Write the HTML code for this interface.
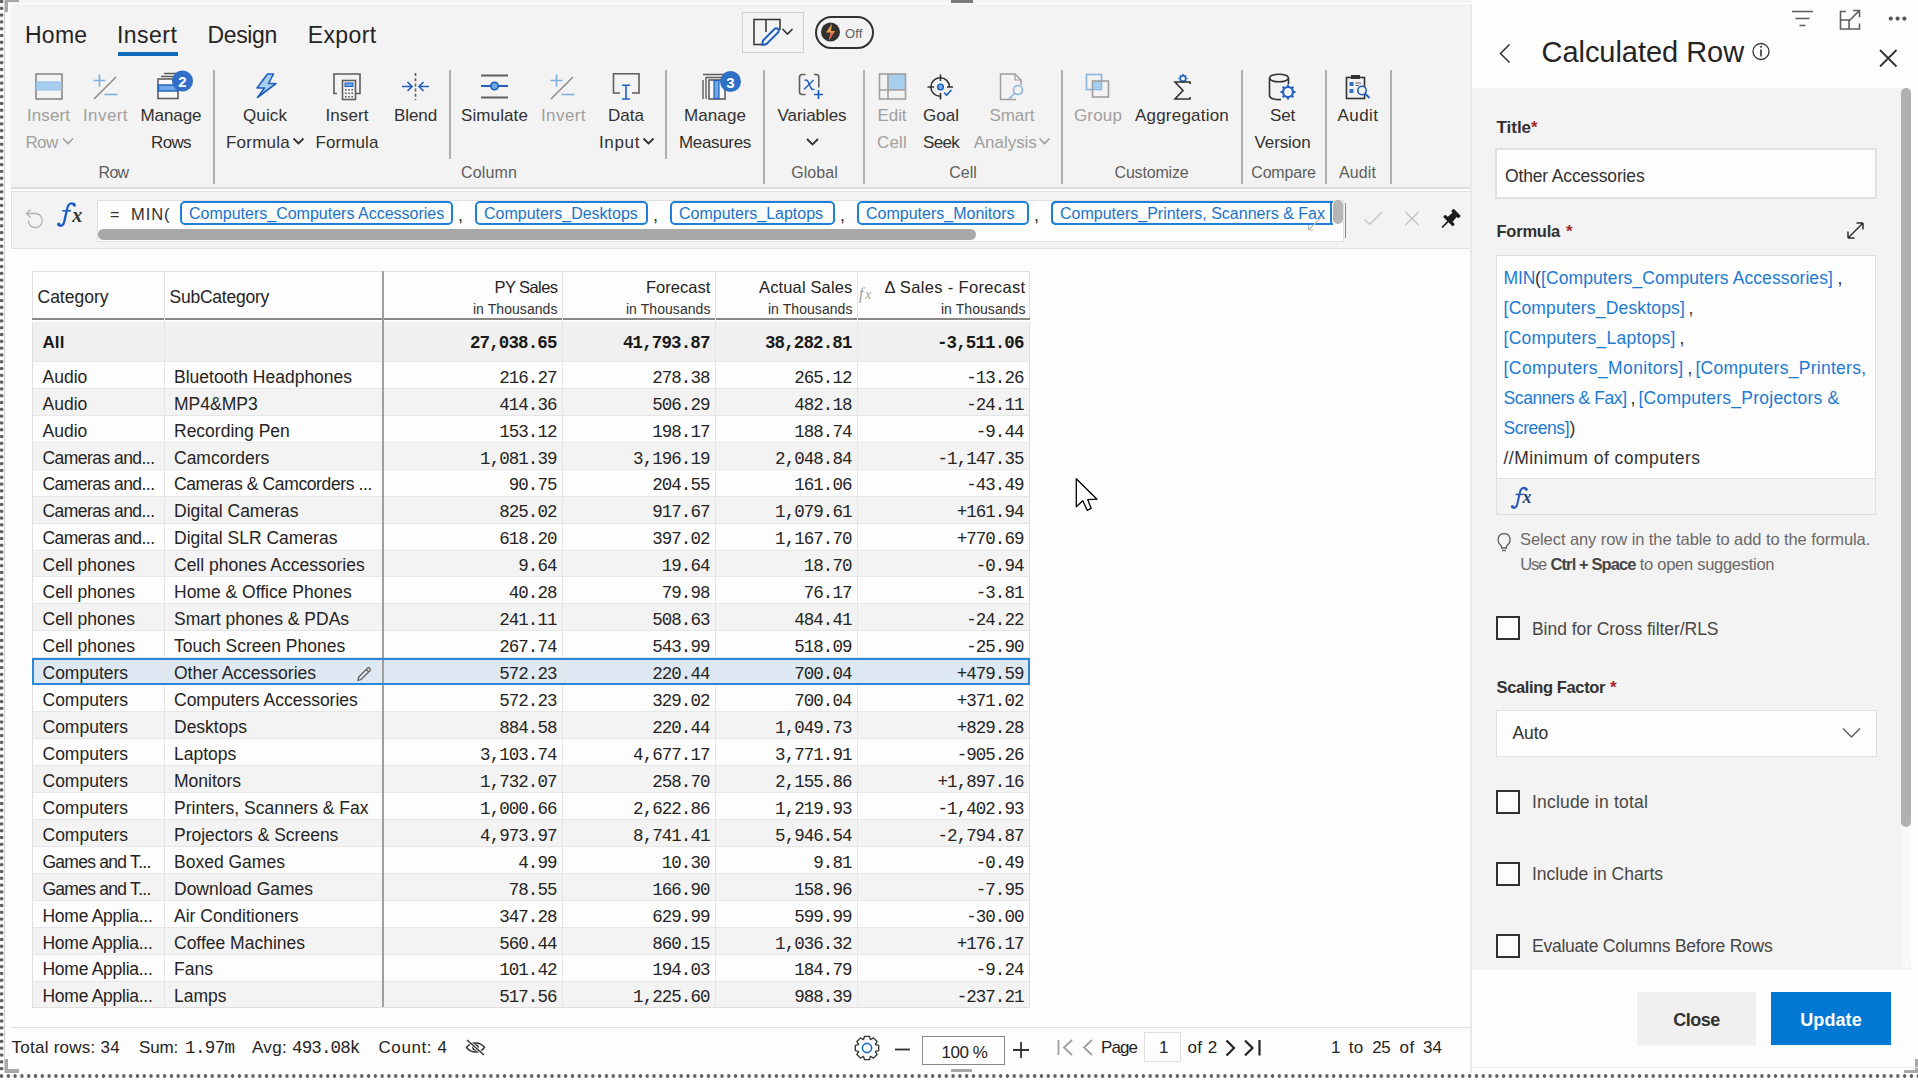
<!DOCTYPE html>
<html><head><meta charset="utf-8"><title>Calculated Row</title>
<style>
html,body{margin:0;padding:0;}
body{width:1918px;height:1080px;overflow:hidden;position:relative;background:#fdfdfd;font-family:'Liberation Sans', sans-serif;}
.t{position:absolute;white-space:nowrap;}
.b{position:absolute;box-sizing:border-box;}
</style></head><body>
<div class="b" style="left:5px;top:0px;width:1913px;height:3px;background:#f4f4f6;"></div><div class="b" style="left:0px;top:0px;width:5px;height:1073px;background:radial-gradient(circle at 1.7px 3.4px,#5f5f5f 1.5px,transparent 2.1px) 0 -1.9px/5px 6.8px repeat-y;"></div><div class="b" style="left:0px;top:1073px;width:1918px;height:7px;background:radial-gradient(circle at 3.4px 3px,#5f5f5f 1.5px,transparent 2.1px) -1.9px 0/6.8px 7px repeat-x;"></div><div class="b" style="left:4px;top:0px;width:1px;height:1073px;background:#d0d0d0;"></div><div class="b" style="left:951px;top:0px;width:22px;height:3px;background:#7a7a7a;"></div><div class="b" style="left:11px;top:4px;width:1460px;height:184px;background:#f3f3f3;"></div><div class="b" style="left:11px;top:187px;width:1460px;height:2px;background:#dcdcdc;"></div><div class="b" style="left:11px;top:191px;width:1460px;height:58px;background:#f3f3f3;border:1px solid #e1e1e1;"></div><div class="b" style="left:11px;top:249px;width:1460px;height:824px;background:#fdfdfd;"></div><div class="b" style="left:1470px;top:4px;width:2px;height:1069px;background:#e8e8e8;"></div><div class="b" style="left:1472px;top:0px;width:446px;height:88px;background:#fdfdfd;"></div><div class="b" style="left:1472px;top:88px;width:439px;height:882px;background:#f3f3f3;"></div><div class="b" style="left:1472px;top:970px;width:446px;height:103px;background:#fdfdfd;"></div><div class="t" style="top:24.00px;font-size:23px;line-height:23px;color:#252423;font-weight:400;font-family:'Liberation Sans', sans-serif;letter-spacing:0.25px;left:25px;">Home</div><div class="t" style="top:24.00px;font-size:23px;line-height:23px;color:#252423;font-weight:400;font-family:'Liberation Sans', sans-serif;letter-spacing:0.46px;left:117px;">Insert</div><div class="t" style="top:24.00px;font-size:23px;line-height:23px;color:#252423;font-weight:400;font-family:'Liberation Sans', sans-serif;letter-spacing:-0.38px;left:207.6px;">Design</div><div class="t" style="top:24.00px;font-size:23px;line-height:23px;color:#252423;font-weight:400;font-family:'Liberation Sans', sans-serif;letter-spacing:0.38px;left:307.7px;">Export</div><div class="b" style="left:118px;top:52px;width:60px;height:4px;background:#0f6cbd;"></div><div class="t" style="top:107.00px;font-size:17px;line-height:17px;color:#a19f9d;font-weight:400;font-family:'Liberation Sans', sans-serif;letter-spacing:0.083px;left:-251.5px;width:600px;text-align:center;">Insert</div><div class="t" style="top:134.00px;font-size:17px;line-height:17px;color:#a19f9d;font-weight:400;font-family:'Liberation Sans', sans-serif;letter-spacing:-0.672px;left:25.5px;">Row</div><div class="t" style="top:107.00px;font-size:17px;line-height:17px;color:#a19f9d;font-weight:400;font-family:'Liberation Sans', sans-serif;letter-spacing:0.417px;left:-194.5px;width:600px;text-align:center;">Invert</div><div class="t" style="top:107.00px;font-size:17px;line-height:17px;color:#323130;font-weight:400;font-family:'Liberation Sans', sans-serif;letter-spacing:-0.07px;left:-129px;width:600px;text-align:center;">Manage</div><div class="t" style="top:134.00px;font-size:17px;line-height:17px;color:#323130;font-weight:400;font-family:'Liberation Sans', sans-serif;letter-spacing:-0.629px;left:-129px;width:600px;text-align:center;">Rows</div><div class="t" style="top:107.00px;font-size:17px;line-height:17px;color:#323130;font-weight:400;font-family:'Liberation Sans', sans-serif;letter-spacing:0.109px;left:-35px;width:600px;text-align:center;">Quick</div><div class="t" style="top:134.00px;font-size:17px;line-height:17px;color:#323130;font-weight:400;font-family:'Liberation Sans', sans-serif;letter-spacing:0.237px;left:226px;">Formula</div><div class="t" style="top:107.00px;font-size:17px;line-height:17px;color:#323130;font-weight:400;font-family:'Liberation Sans', sans-serif;letter-spacing:0.083px;left:47px;width:600px;text-align:center;">Insert</div><div class="t" style="top:134.00px;font-size:17px;line-height:17px;color:#323130;font-weight:400;font-family:'Liberation Sans', sans-serif;letter-spacing:0.094px;left:47px;width:600px;text-align:center;">Formula</div><div class="t" style="top:107.00px;font-size:17px;line-height:17px;color:#323130;font-weight:400;font-family:'Liberation Sans', sans-serif;letter-spacing:-0.097px;left:115.5px;width:600px;text-align:center;">Blend</div><div class="t" style="top:107.00px;font-size:17px;line-height:17px;color:#323130;font-weight:400;font-family:'Liberation Sans', sans-serif;letter-spacing:0.107px;left:194.5px;width:600px;text-align:center;">Simulate</div><div class="t" style="top:107.00px;font-size:17px;line-height:17px;color:#a19f9d;font-weight:400;font-family:'Liberation Sans', sans-serif;letter-spacing:0.417px;left:263.5px;width:600px;text-align:center;">Invert</div><div class="t" style="top:107.00px;font-size:17px;line-height:17px;color:#323130;font-weight:400;font-family:'Liberation Sans', sans-serif;letter-spacing:0.023px;left:326px;width:600px;text-align:center;">Data</div><div class="t" style="top:134.00px;font-size:17px;line-height:17px;color:#323130;font-weight:400;font-family:'Liberation Sans', sans-serif;letter-spacing:0.641px;left:599px;">Input</div><div class="t" style="top:107.00px;font-size:17px;line-height:17px;color:#323130;font-weight:400;font-family:'Liberation Sans', sans-serif;letter-spacing:0.096px;left:415px;width:600px;text-align:center;">Manage</div><div class="t" style="top:134.00px;font-size:17px;line-height:17px;color:#323130;font-weight:400;font-family:'Liberation Sans', sans-serif;letter-spacing:-0.328px;left:415px;width:600px;text-align:center;">Measures</div><div class="t" style="top:107.00px;font-size:17px;line-height:17px;color:#323130;font-weight:400;font-family:'Liberation Sans', sans-serif;letter-spacing:-0.068px;left:512px;width:600px;text-align:center;">Variables</div><div class="t" style="top:107.00px;font-size:17px;line-height:17px;color:#a19f9d;font-weight:400;font-family:'Liberation Sans', sans-serif;letter-spacing:-0.074px;left:592px;width:600px;text-align:center;">Edit</div><div class="t" style="top:134.00px;font-size:17px;line-height:17px;color:#a19f9d;font-weight:400;font-family:'Liberation Sans', sans-serif;letter-spacing:0.176px;left:592px;width:600px;text-align:center;">Cell</div><div class="t" style="top:107.00px;font-size:17px;line-height:17px;color:#323130;font-weight:400;font-family:'Liberation Sans', sans-serif;letter-spacing:0.023px;left:641px;width:600px;text-align:center;">Goal</div><div class="t" style="top:134.00px;font-size:17px;line-height:17px;color:#323130;font-weight:400;font-family:'Liberation Sans', sans-serif;letter-spacing:-0.688px;left:641px;width:600px;text-align:center;">Seek</div><div class="t" style="top:107.00px;font-size:17px;line-height:17px;color:#a19f9d;font-weight:400;font-family:'Liberation Sans', sans-serif;letter-spacing:-0.066px;left:712px;width:600px;text-align:center;">Smart</div><div class="t" style="top:134.00px;font-size:17px;line-height:17px;color:#a19f9d;font-weight:400;font-family:'Liberation Sans', sans-serif;letter-spacing:-0.039px;left:973.8px;">Analysis</div><div class="t" style="top:107.00px;font-size:17px;line-height:17px;color:#a19f9d;font-weight:400;font-family:'Liberation Sans', sans-serif;letter-spacing:0.153px;left:798px;width:600px;text-align:center;">Group</div><div class="t" style="top:107.00px;font-size:17px;line-height:17px;color:#323130;font-weight:400;font-family:'Liberation Sans', sans-serif;letter-spacing:0.212px;left:882px;width:600px;text-align:center;">Aggregation</div><div class="t" style="top:107.00px;font-size:17px;line-height:17px;color:#323130;font-weight:400;font-family:'Liberation Sans', sans-serif;letter-spacing:-0.172px;left:982.5px;width:600px;text-align:center;">Set</div><div class="t" style="top:134.00px;font-size:17px;line-height:17px;color:#323130;font-weight:400;font-family:'Liberation Sans', sans-serif;letter-spacing:-0.1px;left:982.5px;width:600px;text-align:center;">Version</div><div class="t" style="top:107.00px;font-size:17px;line-height:17px;color:#323130;font-weight:400;font-family:'Liberation Sans', sans-serif;letter-spacing:0.45px;left:1058px;width:600px;text-align:center;">Audit</div><div class="t" style="top:165.00px;font-size:16px;line-height:16px;color:#605e5c;font-weight:400;font-family:'Liberation Sans', sans-serif;letter-spacing:-0.677px;left:-186.5px;width:600px;text-align:center;">Row</div><div class="t" style="top:165.00px;font-size:16px;line-height:16px;color:#605e5c;font-weight:400;font-family:'Liberation Sans', sans-serif;letter-spacing:0.138px;left:189px;width:600px;text-align:center;">Column</div><div class="t" style="top:165.00px;font-size:16px;line-height:16px;color:#605e5c;font-weight:400;font-family:'Liberation Sans', sans-serif;letter-spacing:0.034px;left:514.5px;width:600px;text-align:center;">Global</div><div class="t" style="top:165.00px;font-size:16px;line-height:16px;color:#605e5c;font-weight:400;font-family:'Liberation Sans', sans-serif;letter-spacing:-0.023px;left:663px;width:600px;text-align:center;">Cell</div><div class="t" style="top:165.00px;font-size:16px;line-height:16px;color:#605e5c;font-weight:400;font-family:'Liberation Sans', sans-serif;letter-spacing:-0.181px;left:851.5px;width:600px;text-align:center;">Customize</div><div class="t" style="top:165.00px;font-size:16px;line-height:16px;color:#605e5c;font-weight:400;font-family:'Liberation Sans', sans-serif;letter-spacing:-0.192px;left:983.5px;width:600px;text-align:center;">Compare</div><div class="t" style="top:165.00px;font-size:16px;line-height:16px;color:#605e5c;font-weight:400;font-family:'Liberation Sans', sans-serif;letter-spacing:0.1px;left:1057.5px;width:600px;text-align:center;">Audit</div><div class="b" style="left:212.5px;top:70px;width:2px;height:114px;background:#b0b0b0;"></div><div class="b" style="left:448.5px;top:70px;width:2px;height:89px;background:#b0b0b0;"></div><div class="b" style="left:665px;top:70px;width:2px;height:89px;background:#b0b0b0;"></div><div class="b" style="left:763px;top:70px;width:2px;height:114px;background:#b0b0b0;"></div><div class="b" style="left:863px;top:70px;width:2px;height:114px;background:#b0b0b0;"></div><div class="b" style="left:1061px;top:70px;width:2px;height:114px;background:#b0b0b0;"></div><div class="b" style="left:1241px;top:70px;width:2px;height:114px;background:#b0b0b0;"></div><div class="b" style="left:1325px;top:70px;width:2px;height:114px;background:#b0b0b0;"></div><div class="b" style="left:1390px;top:70px;width:2px;height:114px;background:#b0b0b0;"></div><svg class="b" style="left:0;top:0" width="1918" height="200" viewBox="0 0 1918 200" fill="none">
<!-- chevrons -->
<path d="M63 138.5 l5 5 l5 -5" stroke="#a19f9d" stroke-width="1.7"/>
<path d="M293.5 138.5 l5 5 l5 -5" stroke="#323130" stroke-width="1.8"/>
<path d="M643.5 138.5 l5 5 l5 -5" stroke="#323130" stroke-width="1.8"/>
<path d="M807 139 l5.5 5.5 l5.5 -5.5" stroke="#323130" stroke-width="1.8"/>
<path d="M1039.5 138.5 l5 5 l5 -5" stroke="#a19f9d" stroke-width="1.7"/>
<!-- insert row -->
<rect x="36" y="74" width="26" height="25" stroke="#8a8886" stroke-width="1.6"/>
<rect x="36.5" y="82" width="25" height="8" fill="#a9cff0" stroke="#8fbde6" stroke-width="1"/>
<!-- invert (x2) -->
<g id="inv1" stroke="#7fb0de" stroke-width="1.6">
<path d="M93.5 80.5 h12 M99.5 74.5 v12"/><path d="M104.5 94.5 h13"/>
</g>
<path d="M94 99 L116 77" stroke="#8a8886" stroke-width="1.5"/>
<g stroke="#7fb0de" stroke-width="1.6"><path d="M550.5 80.5 h12 M556.5 74.5 v12"/><path d="M561.5 94.5 h13"/></g>
<path d="M551 99 L573 77" stroke="#8a8886" stroke-width="1.5"/>
<!-- manage rows -->
<path d="M164 73.5 h16 M161 76.5 h18" stroke="#605e5c" stroke-width="1.4"/>
<rect x="158" y="79" width="20" height="19.5" fill="#fafafa" stroke="#605e5c" stroke-width="1.6"/>
<rect x="158.5" y="85" width="19" height="6" fill="#6fa8e3" stroke="#1f5fbf" stroke-width="1.4"/>
<circle cx="182.5" cy="81" r="10.5" fill="#2f6fc7"/>
<text x="182.5" y="87" font-family="Liberation Sans" font-weight="700" font-size="15" fill="#fff" text-anchor="middle">2</text>
<!-- quick formula bolt -->
<path d="M267.5 74 L257 88 H264.5 L257.5 97.5 L276 83.5 H268.5 L273.5 74 Z" fill="#a9cff0" stroke="#1f5fbf" stroke-width="1.6" stroke-linejoin="round"/>
<!-- insert formula -->
<path d="M337 93.5 H334 V74 H360 V93.5 H356" stroke="#605e5c" stroke-width="1.6"/>
<rect x="342.5" y="80.5" width="13" height="19" fill="#f3f3f3" stroke="#605e5c" stroke-width="1.6"/>
<rect x="345" y="83" width="8" height="3.5" fill="#6fa8e3" stroke="#1f5fbf" stroke-width="1"/>
<g fill="#605e5c"><rect x="345" y="89" width="1.6" height="1.6"/><rect x="348.2" y="89" width="1.6" height="1.6"/><rect x="351.4" y="89" width="1.6" height="1.6"/><rect x="345" y="92.5" width="1.6" height="1.6"/><rect x="348.2" y="92.5" width="1.6" height="1.6"/><rect x="351.4" y="92.5" width="1.6" height="1.6"/><rect x="345" y="96" width="1.6" height="1.6"/><rect x="348.2" y="96" width="1.6" height="1.6"/><rect x="351.4" y="96" width="1.6" height="1.6"/></g>
<!-- blend -->
<path d="M415.5 73 V100" stroke="#605e5c" stroke-width="1.6" stroke-dasharray="3 2.2"/>
<path d="M402 86.5 H412 M407.5 82 L412 86.5 L407.5 91" stroke="#1f5fbf" stroke-width="1.6"/>
<path d="M429 86.5 H419 M423.5 82 L419 86.5 L423.5 91" stroke="#1f5fbf" stroke-width="1.6"/>
<!-- simulate -->
<path d="M481 75.5 H508 M481 97.5 H508 M481 86 H508" stroke="#605e5c" stroke-width="1.8"/>
<path d="M481 86 H508" stroke="#1f5fbf" stroke-width="1.8"/>
<circle cx="494.5" cy="86" r="3.8" fill="#6fa8e3" stroke="#1f5fbf" stroke-width="1.6"/>
<!-- data input -->
<path d="M620 93 H613.5 V73.8 H639 V93 H632" stroke="#605e5c" stroke-width="1.6"/>
<path d="M626 85 V99 M622 85.2 H630 M622 99 H630" stroke="#1f5fbf" stroke-width="1.6"/>
<!-- manage measures -->
<path d="M703 80 V99 M706 77 V99 M703 74.5 H725 M706 77.5 H723" stroke="#605e5c" stroke-width="1.4"/>
<rect x="709" y="80" width="16" height="19" fill="#fafafa" stroke="#605e5c" stroke-width="1.6"/>
<rect x="714" y="80.5" width="5" height="18" fill="#6fa8e3" stroke="#1f5fbf" stroke-width="1.2"/>
<circle cx="730.5" cy="81.5" r="10.5" fill="#2f6fc7"/>
<text x="730.5" y="87.5" font-family="Liberation Sans" font-weight="700" font-size="15" fill="#fff" text-anchor="middle">3</text>
<!-- variables -->
<path d="M805.5 74.5 H802 Q799.5 74.5 799.5 77.5 V91.5 Q799.5 94.5 802 94.5 H805.5" stroke="#605e5c" stroke-width="1.6"/>
<path d="M814 74.5 H816.5 Q818.8 74.5 818.8 77.5 V87.5" stroke="#605e5c" stroke-width="1.6"/>
<path d="M804.5 80.5 Q806.5 79 808 81.5 L811 88 Q812.5 90.5 814.5 89" stroke="#1f5fbf" stroke-width="1.5"/>
<path d="M813.5 80 L804 89.5" stroke="#1f5fbf" stroke-width="1.5"/>
<path d="M818.5 90 V99 M814 94.5 H823" stroke="#1f5fbf" stroke-width="1.7"/>
<!-- edit cell -->
<rect x="888" y="74" width="18" height="16" fill="#a9cff0"/>
<rect x="879.5" y="74" width="26" height="25" stroke="#a19f9d" stroke-width="1.6"/>
<path d="M888 74 V99 M879.5 90 H905.5" stroke="#a19f9d" stroke-width="1.6"/>
<!-- goal seek -->
<path d="M949.5 87 A9.3 9.3 0 1 0 940.5 96.3" stroke="#323130" stroke-width="1.6"/>
<path d="M940.5 74.5 V81 M940.5 93 V99.5 M927.5 87 H934 M947 87 H953" stroke="#323130" stroke-width="1.6"/>
<circle cx="940.5" cy="87" r="2.9" fill="#6fa8e3" stroke="#1f5fbf" stroke-width="1.4"/>
<path d="M944 92.5 L946.5 95 L951.5 90" stroke="#1f5fbf" stroke-width="1.6"/>
<!-- smart analysis -->
<path d="M1016 99.5 H1000.5 V74 H1015 L1021 80 V85" stroke="#a19f9d" stroke-width="1.5"/>
<path d="M1015 74 V80 H1021" stroke="#a19f9d" stroke-width="1.2"/>
<circle cx="1018" cy="90" r="4.5" stroke="#8ab4dc" stroke-width="1.6"/>
<path d="M1014.5 93.5 L1009 99" stroke="#8ab4dc" stroke-width="1.6"/>
<!-- group -->
<rect x="1086.5" y="74.5" width="15" height="15" stroke="#8ab4dc" stroke-width="1.6"/>
<rect x="1093" y="81" width="8" height="8" fill="#a9cff0"/>
<rect x="1092.5" y="81" width="16" height="16" stroke="#a19f9d" stroke-width="1.6"/>
<!-- aggregation -->
<circle cx="1183" cy="78.5" r="2.8" stroke="#1f5fbf" stroke-width="1.6"/>
<path d="M1183 74 V75 M1183 82 V83 M1178.5 78.5 H1179.5 M1186.5 78.5 H1187.5 M1180 75.5 l0.8 0.8 M1185.2 80.7 l0.8 0.8 M1186 75.5 l-0.8 0.8 M1180.8 80.7 l-0.8 0.8" stroke="#1f5fbf" stroke-width="1.6"/>
<path d="M1190 84 V82 H1175 L1183 90.5 L1175 99 H1190 V97" stroke="#323130" stroke-width="1.6"/>
<!-- set version -->
<ellipse cx="1279" cy="78" rx="9.5" ry="3.8" stroke="#323130" stroke-width="1.6"/>
<path d="M1269.5 78 V95.5 C1269.5 99 1277 100 1281 99.5 M1288.5 78 V84" stroke="#323130" stroke-width="1.6"/>
<circle cx="1288" cy="92" r="5" stroke="#1f5fbf" stroke-width="2.2"/>
<path d="M1288 84.5 V86.5 M1288 97.5 V99.5 M1280.5 92 H1282.5 M1293.5 92 H1295.5 M1282.7 86.7 l1.4 1.4 M1291.9 95.9 l1.4 1.4 M1293.3 86.7 l-1.4 1.4 M1284.1 95.9 l-1.4 1.4" stroke="#1f5fbf" stroke-width="2.2"/>
<!-- audit -->
<rect x="1346.5" y="77.5" width="18" height="21" stroke="#323130" stroke-width="1.6"/>
<rect x="1351" y="75" width="9" height="4" fill="#323130"/>
<rect x="1349.5" y="82" width="4" height="4" fill="#2f6fc7"/><rect x="1349.5" y="89" width="4" height="4" fill="#2f6fc7"/>
<path d="M1355.5 83 H1361 M1355.5 85.5 H1359" stroke="#605e5c" stroke-width="1.2"/>
<circle cx="1362" cy="90.5" r="4.2" fill="#f3f3f3" stroke="#1f5fbf" stroke-width="1.6"/>
<path d="M1365 93.5 L1369.5 98" stroke="#1f5fbf" stroke-width="1.8"/>
</svg><div class="b" style="left:742px;top:12px;width:62px;height:41px;border:1px solid #d2d0ce;background:#f3f3f3;"></div><div class="b" style="left:815px;top:16px;width:59px;height:33px;border:2px solid #323130;border-radius:17px;"></div><div class="t" style="top:27.00px;font-size:13px;line-height:13px;color:#605e5c;font-weight:400;font-family:'Liberation Sans', sans-serif;letter-spacing:0.135px;left:845px;">Off</div><svg class="b" style="left:0;top:0" width="1918" height="60" viewBox="0 0 1918 60" fill="none">
<path d="M766 44.5 H754 V19.5 H780 V30 M766 19.5 V32" stroke="#323130" stroke-width="1.5"/>
<path d="M766.5 44 L778 32.5 A2.2 2.2 0 0 0 774.5 29 L763 40.5 L762 45 Z" fill="#f3f3f3" stroke="#1f5fbf" stroke-width="2" stroke-linejoin="round"/>
<path d="M782.5 29 L787.5 34 L792.5 29" stroke="#323130" stroke-width="1.6"/>
<circle cx="830.5" cy="32" r="9.5" fill="#323130"/>
<path d="M832 23.5 L826 32.5 H830.5 L829 40.5 L835 31 H831 Z" fill="#e8a04c"/>
<path d="M830.5 32.5 H834 L829 40.5 Z" fill="#e35d4b"/>
</svg><div class="b" style="left:97px;top:200px;width:1247px;height:42px;background:#fdfdfd;border:1px solid #e1dfdd;"></div><div class="t" style="top:207.00px;font-size:16px;line-height:16px;color:#323130;font-weight:400;font-family:'Liberation Sans', sans-serif;left:110px;">=</div><div class="t" style="top:206.00px;font-size:16.5px;line-height:16.5px;color:#323130;font-weight:400;font-family:'Liberation Sans', sans-serif;letter-spacing:0.938px;left:131px;">MIN(</div><div class="b" style="left:180px;top:201px;width:273px;height:24px;border:2px solid #1f7fd8;border-radius:5px;background:#fdfdfd;"></div><div class="t" style="top:206.00px;font-size:16px;line-height:16px;color:#1a73c9;font-weight:400;font-family:'Liberation Sans', sans-serif;left:189px;">Computers_Computers Accessories</div><div class="t" style="top:206.00px;font-size:18px;line-height:18px;color:#323130;font-weight:400;font-family:'Liberation Sans', sans-serif;left:458px;">,</div><div class="b" style="left:475px;top:201px;width:173px;height:24px;border:2px solid #1f7fd8;border-radius:5px;background:#fdfdfd;"></div><div class="t" style="top:206.00px;font-size:16px;line-height:16px;color:#1a73c9;font-weight:400;font-family:'Liberation Sans', sans-serif;left:484px;">Computers_Desktops</div><div class="t" style="top:206.00px;font-size:18px;line-height:18px;color:#323130;font-weight:400;font-family:'Liberation Sans', sans-serif;left:653px;">,</div><div class="b" style="left:670px;top:201px;width:165px;height:24px;border:2px solid #1f7fd8;border-radius:5px;background:#fdfdfd;"></div><div class="t" style="top:206.00px;font-size:16px;line-height:16px;color:#1a73c9;font-weight:400;font-family:'Liberation Sans', sans-serif;left:679px;">Computers_Laptops</div><div class="t" style="top:206.00px;font-size:18px;line-height:18px;color:#323130;font-weight:400;font-family:'Liberation Sans', sans-serif;left:840px;">,</div><div class="b" style="left:857px;top:201px;width:172px;height:24px;border:2px solid #1f7fd8;border-radius:5px;background:#fdfdfd;"></div><div class="t" style="top:206.00px;font-size:16px;line-height:16px;color:#1a73c9;font-weight:400;font-family:'Liberation Sans', sans-serif;left:866px;">Computers_Monitors</div><div class="t" style="top:206.00px;font-size:18px;line-height:18px;color:#323130;font-weight:400;font-family:'Liberation Sans', sans-serif;left:1034px;">,</div><div class="b" style="left:1051px;top:201px;width:282px;height:24px;border:2px solid #1f7fd8;border-radius:5px;background:#fdfdfd;"></div><div class="t" style="top:206.00px;font-size:16px;line-height:16px;color:#1a73c9;font-weight:400;font-family:'Liberation Sans', sans-serif;left:1060px;">Computers_Printers, Scanners &amp; Fax</div><div class="b" style="left:1325px;top:201px;width:18px;height:24px;background:#fdfdfd;"></div><div class="b" style="left:1051px;top:201px;width:282px;height:24px;border:2px solid #1f7fd8;border-right:none;border-radius:5px 0 0 5px;"></div><div class="b" style="left:1330px;top:201px;width:2px;height:24px;background:#1f7fd8;"></div><div class="b" style="left:98px;top:229px;width:878px;height:11px;background:#a8a8a8;border-radius:6px;"></div><div class="b" style="left:1333px;top:200px;width:10px;height:24px;background:#b5b5b5;border-radius:5px;"></div><div class="b" style="left:1345px;top:203px;width:1px;height:35px;background:#8a8886;"></div><svg class="b" style="left:0;top:180" width="1918" height="80" viewBox="0 180 1918 80" fill="none">
<path d="M26.5 213.5 H35.3 A7 7 0 1 1 28.3 220.5" stroke="#b3b0ad" stroke-width="1.3"/>
<path d="M30.5 209.5 L26.5 213.5 L30.5 217.5" stroke="#b3b0ad" stroke-width="1.3"/>
<path d="M1364.5 219.5 L1369.7 224.2 L1382 212.4" stroke="#c8c6c4" stroke-width="1.5"/>
<path d="M1405.5 212 L1418.5 225 M1418.5 212 L1405.5 225" stroke="#c8c6c4" stroke-width="1.5"/>
<g transform="translate(1442,227.5) rotate(45)" fill="#1b1a19"><path d="M0 0 V-9" stroke="#1b1a19" stroke-width="1.6"/><rect x="-6.8" y="-11.5" width="13.6" height="3.2" rx="1"/><path d="M-3.6 -9 H3.6 L2.9 -18.5 H-2.9 Z"/><rect x="-5.2" y="-21.5" width="10.4" height="3.6" rx="1"/></g>
<path d="M1308.5 230 L1322 216.5 M1308.5 230 h5 M1308.5 230 v-5" stroke="#bdbbb9" stroke-width="1.1"/>
</svg><svg class="b" style="left:50px;top:196px" width="40" height="36" viewBox="50 196 40 36"><path d="M74 204.2 C71 202.3 68 203.8 67.2 208.5 L64.3 221.5 C63.4 225.8 60.8 226.8 58.6 224.8" stroke="#1a5cc4" stroke-width="2.3" fill="none" stroke-linecap="round"/><circle cx="74.3" cy="205" r="1.7" fill="#1a5cc4"/><circle cx="58.8" cy="224.2" r="1.7" fill="#1a5cc4"/><path d="M62.3 210.8 H71" stroke="#1a5cc4" stroke-width="1.6"/><text x="72.3" y="221.8" font-family="Liberation Serif" font-style="italic" font-weight="700" font-size="20" fill="#323130">x</text></svg><div class="b" style="left:32px;top:271px;width:998px;height:48px;background:#fdfdfd;border-top:1px solid #e1dfdd;border-left:1px solid #e1dfdd;border-right:1px solid #e1dfdd;"></div><div class="b" style="left:32px;top:318px;width:998px;height:2px;background:#8a8886;"></div><div class="t" style="top:289.00px;font-size:17.5px;line-height:17.5px;color:#252423;font-weight:400;font-family:'Liberation Sans', sans-serif;letter-spacing:-0.002px;left:37.5px;">Category</div><div class="t" style="top:289.00px;font-size:17.5px;line-height:17.5px;color:#252423;font-weight:400;font-family:'Liberation Sans', sans-serif;letter-spacing:-0.241px;left:169.5px;">SubCategory</div><div class="t" style="top:279.00px;font-size:16.5px;line-height:16.5px;color:#252423;font-weight:400;font-family:'Liberation Sans', sans-serif;letter-spacing:-0.568px;left:-242.5px;width:800px;text-align:right;">PY Sales</div><div class="t" style="top:302.00px;font-size:14px;line-height:14px;color:#323130;font-weight:400;font-family:'Liberation Sans', sans-serif;letter-spacing:0.061px;left:-242.5px;width:800px;text-align:right;">in Thousands</div><div class="t" style="top:279.00px;font-size:16.5px;line-height:16.5px;color:#252423;font-weight:400;font-family:'Liberation Sans', sans-serif;letter-spacing:0.041px;left:-89.5px;width:800px;text-align:right;">Forecast</div><div class="t" style="top:302.00px;font-size:14px;line-height:14px;color:#323130;font-weight:400;font-family:'Liberation Sans', sans-serif;letter-spacing:0.061px;left:-89.5px;width:800px;text-align:right;">in Thousands</div><div class="t" style="top:279.00px;font-size:16.5px;line-height:16.5px;color:#252423;font-weight:400;font-family:'Liberation Sans', sans-serif;letter-spacing:0.151px;left:52.5px;width:800px;text-align:right;">Actual Sales</div><div class="t" style="top:302.00px;font-size:14px;line-height:14px;color:#323130;font-weight:400;font-family:'Liberation Sans', sans-serif;letter-spacing:0.061px;left:52.5px;width:800px;text-align:right;">in Thousands</div><div class="t" style="top:279.00px;font-size:16.5px;line-height:16.5px;color:#252423;font-weight:400;font-family:'Liberation Sans', sans-serif;letter-spacing:0.345px;left:225.5px;width:800px;text-align:right;">Δ Sales - Forecast</div><div class="t" style="top:302.00px;font-size:14px;line-height:14px;color:#323130;font-weight:400;font-family:'Liberation Sans', sans-serif;letter-spacing:0.061px;left:225.5px;width:800px;text-align:right;">in Thousands</div><svg class="b" style="left:855px;top:283px" width="25" height="24" viewBox="855 283 25 24"><text x="859" y="299" font-family="Liberation Serif" font-style="italic" font-size="16" fill="#a19f9d">f</text><text x="865" y="299" font-family="Liberation Serif" font-style="italic" font-size="14" fill="#a19f9d">x</text></svg><div class="b" style="left:32px;top:322px;width:998px;height:39px;background:#f0f0f0;border-left:1px solid #e1dfdd;border-right:1px solid #e1dfdd;"></div><div class="t" style="top:334.00px;font-size:17px;line-height:17px;color:#1b1a19;font-weight:700;font-family:'Liberation Sans', sans-serif;letter-spacing:0.094px;left:42.5px;">All</div><div class="t" style="top:335.00px;font-size:17.5px;line-height:17.5px;color:#1b1a19;font-weight:700;font-family:'Liberation Mono', monospace;letter-spacing:-0.889px;left:-243.5px;width:800px;text-align:right;">27,038.65</div><div class="t" style="top:335.00px;font-size:17.5px;line-height:17.5px;color:#1b1a19;font-weight:700;font-family:'Liberation Mono', monospace;letter-spacing:-0.889px;left:-90.5px;width:800px;text-align:right;">41,793.87</div><div class="t" style="top:335.00px;font-size:17.5px;line-height:17.5px;color:#1b1a19;font-weight:700;font-family:'Liberation Mono', monospace;letter-spacing:-0.889px;left:51.5px;width:800px;text-align:right;">38,282.81</div><div class="t" style="top:335.00px;font-size:17.5px;line-height:17.5px;color:#1b1a19;font-weight:700;font-family:'Liberation Mono', monospace;letter-spacing:-0.889px;left:223.5px;width:800px;text-align:right;">-3,511.06</div><div class="b" style="left:32px;top:361px;width:998px;height:27px;background:#fdfdfd;border-top:1px solid #e6e6e6;border-left:1px solid #e1dfdd;border-right:1px solid #e1dfdd;"></div><div class="t" style="top:369.00px;font-size:17.5px;line-height:17.5px;color:#252423;font-weight:400;font-family:'Liberation Sans', sans-serif;left:42.5px;">Audio</div><div class="t" style="top:369.00px;font-size:17.5px;line-height:17.5px;color:#252423;font-weight:400;font-family:'Liberation Sans', sans-serif;left:174px;">Bluetooth Headphones</div><div class="t" style="top:370.00px;font-size:17.5px;line-height:17.5px;color:#252423;font-weight:400;font-family:'Liberation Mono', monospace;letter-spacing:-0.95px;left:-243.5px;width:800px;text-align:right;">216.27</div><div class="t" style="top:370.00px;font-size:17.5px;line-height:17.5px;color:#252423;font-weight:400;font-family:'Liberation Mono', monospace;letter-spacing:-0.95px;left:-90.5px;width:800px;text-align:right;">278.38</div><div class="t" style="top:370.00px;font-size:17.5px;line-height:17.5px;color:#252423;font-weight:400;font-family:'Liberation Mono', monospace;letter-spacing:-0.95px;left:51.5px;width:800px;text-align:right;">265.12</div><div class="t" style="top:370.00px;font-size:17.5px;line-height:17.5px;color:#252423;font-weight:400;font-family:'Liberation Mono', monospace;letter-spacing:-0.95px;left:223.5px;width:800px;text-align:right;">-13.26</div><div class="b" style="left:32px;top:388px;width:998px;height:27px;background:#f3f3f3;border-top:1px solid #e6e6e6;border-left:1px solid #e1dfdd;border-right:1px solid #e1dfdd;"></div><div class="t" style="top:396.00px;font-size:17.5px;line-height:17.5px;color:#252423;font-weight:400;font-family:'Liberation Sans', sans-serif;left:42.5px;">Audio</div><div class="t" style="top:396.00px;font-size:17.5px;line-height:17.5px;color:#252423;font-weight:400;font-family:'Liberation Sans', sans-serif;left:174px;">MP4&amp;MP3</div><div class="t" style="top:397.00px;font-size:17.5px;line-height:17.5px;color:#252423;font-weight:400;font-family:'Liberation Mono', monospace;letter-spacing:-0.95px;left:-243.5px;width:800px;text-align:right;">414.36</div><div class="t" style="top:397.00px;font-size:17.5px;line-height:17.5px;color:#252423;font-weight:400;font-family:'Liberation Mono', monospace;letter-spacing:-0.95px;left:-90.5px;width:800px;text-align:right;">506.29</div><div class="t" style="top:397.00px;font-size:17.5px;line-height:17.5px;color:#252423;font-weight:400;font-family:'Liberation Mono', monospace;letter-spacing:-0.95px;left:51.5px;width:800px;text-align:right;">482.18</div><div class="t" style="top:397.00px;font-size:17.5px;line-height:17.5px;color:#252423;font-weight:400;font-family:'Liberation Mono', monospace;letter-spacing:-0.95px;left:223.5px;width:800px;text-align:right;">-24.11</div><div class="b" style="left:32px;top:415px;width:998px;height:27px;background:#fdfdfd;border-top:1px solid #e6e6e6;border-left:1px solid #e1dfdd;border-right:1px solid #e1dfdd;"></div><div class="t" style="top:423.00px;font-size:17.5px;line-height:17.5px;color:#252423;font-weight:400;font-family:'Liberation Sans', sans-serif;left:42.5px;">Audio</div><div class="t" style="top:423.00px;font-size:17.5px;line-height:17.5px;color:#252423;font-weight:400;font-family:'Liberation Sans', sans-serif;left:174px;">Recording Pen</div><div class="t" style="top:424.00px;font-size:17.5px;line-height:17.5px;color:#252423;font-weight:400;font-family:'Liberation Mono', monospace;letter-spacing:-0.95px;left:-243.5px;width:800px;text-align:right;">153.12</div><div class="t" style="top:424.00px;font-size:17.5px;line-height:17.5px;color:#252423;font-weight:400;font-family:'Liberation Mono', monospace;letter-spacing:-0.95px;left:-90.5px;width:800px;text-align:right;">198.17</div><div class="t" style="top:424.00px;font-size:17.5px;line-height:17.5px;color:#252423;font-weight:400;font-family:'Liberation Mono', monospace;letter-spacing:-0.95px;left:51.5px;width:800px;text-align:right;">188.74</div><div class="t" style="top:424.00px;font-size:17.5px;line-height:17.5px;color:#252423;font-weight:400;font-family:'Liberation Mono', monospace;letter-spacing:-0.95px;left:223.5px;width:800px;text-align:right;">-9.44</div><div class="b" style="left:32px;top:442px;width:998px;height:27px;background:#f3f3f3;border-top:1px solid #e6e6e6;border-left:1px solid #e1dfdd;border-right:1px solid #e1dfdd;"></div><div class="t" style="top:450.00px;font-size:17.5px;line-height:17.5px;color:#252423;font-weight:400;font-family:'Liberation Sans', sans-serif;letter-spacing:-0.546px;left:42.5px;">Cameras and...</div><div class="t" style="top:450.00px;font-size:17.5px;line-height:17.5px;color:#252423;font-weight:400;font-family:'Liberation Sans', sans-serif;left:174px;">Camcorders</div><div class="t" style="top:451.00px;font-size:17.5px;line-height:17.5px;color:#252423;font-weight:400;font-family:'Liberation Mono', monospace;letter-spacing:-0.95px;left:-243.5px;width:800px;text-align:right;">1,081.39</div><div class="t" style="top:451.00px;font-size:17.5px;line-height:17.5px;color:#252423;font-weight:400;font-family:'Liberation Mono', monospace;letter-spacing:-0.95px;left:-90.5px;width:800px;text-align:right;">3,196.19</div><div class="t" style="top:451.00px;font-size:17.5px;line-height:17.5px;color:#252423;font-weight:400;font-family:'Liberation Mono', monospace;letter-spacing:-0.95px;left:51.5px;width:800px;text-align:right;">2,048.84</div><div class="t" style="top:451.00px;font-size:17.5px;line-height:17.5px;color:#252423;font-weight:400;font-family:'Liberation Mono', monospace;letter-spacing:-0.95px;left:223.5px;width:800px;text-align:right;">-1,147.35</div><div class="b" style="left:32px;top:469px;width:998px;height:27px;background:#fdfdfd;border-top:1px solid #e6e6e6;border-left:1px solid #e1dfdd;border-right:1px solid #e1dfdd;"></div><div class="t" style="top:476.00px;font-size:17.5px;line-height:17.5px;color:#252423;font-weight:400;font-family:'Liberation Sans', sans-serif;letter-spacing:-0.546px;left:42.5px;">Cameras and...</div><div class="t" style="top:476.00px;font-size:17.5px;line-height:17.5px;color:#252423;font-weight:400;font-family:'Liberation Sans', sans-serif;letter-spacing:-0.381px;left:174px;">Cameras &amp; Camcorders ...</div><div class="t" style="top:477.00px;font-size:17.5px;line-height:17.5px;color:#252423;font-weight:400;font-family:'Liberation Mono', monospace;letter-spacing:-0.95px;left:-243.5px;width:800px;text-align:right;">90.75</div><div class="t" style="top:477.00px;font-size:17.5px;line-height:17.5px;color:#252423;font-weight:400;font-family:'Liberation Mono', monospace;letter-spacing:-0.95px;left:-90.5px;width:800px;text-align:right;">204.55</div><div class="t" style="top:477.00px;font-size:17.5px;line-height:17.5px;color:#252423;font-weight:400;font-family:'Liberation Mono', monospace;letter-spacing:-0.95px;left:51.5px;width:800px;text-align:right;">161.06</div><div class="t" style="top:477.00px;font-size:17.5px;line-height:17.5px;color:#252423;font-weight:400;font-family:'Liberation Mono', monospace;letter-spacing:-0.95px;left:223.5px;width:800px;text-align:right;">-43.49</div><div class="b" style="left:32px;top:496px;width:998px;height:27px;background:#f3f3f3;border-top:1px solid #e6e6e6;border-left:1px solid #e1dfdd;border-right:1px solid #e1dfdd;"></div><div class="t" style="top:503.00px;font-size:17.5px;line-height:17.5px;color:#252423;font-weight:400;font-family:'Liberation Sans', sans-serif;letter-spacing:-0.546px;left:42.5px;">Cameras and...</div><div class="t" style="top:503.00px;font-size:17.5px;line-height:17.5px;color:#252423;font-weight:400;font-family:'Liberation Sans', sans-serif;left:174px;">Digital Cameras</div><div class="t" style="top:504.00px;font-size:17.5px;line-height:17.5px;color:#252423;font-weight:400;font-family:'Liberation Mono', monospace;letter-spacing:-0.95px;left:-243.5px;width:800px;text-align:right;">825.02</div><div class="t" style="top:504.00px;font-size:17.5px;line-height:17.5px;color:#252423;font-weight:400;font-family:'Liberation Mono', monospace;letter-spacing:-0.95px;left:-90.5px;width:800px;text-align:right;">917.67</div><div class="t" style="top:504.00px;font-size:17.5px;line-height:17.5px;color:#252423;font-weight:400;font-family:'Liberation Mono', monospace;letter-spacing:-0.95px;left:51.5px;width:800px;text-align:right;">1,079.61</div><div class="t" style="top:504.00px;font-size:17.5px;line-height:17.5px;color:#252423;font-weight:400;font-family:'Liberation Mono', monospace;letter-spacing:-0.95px;left:223.5px;width:800px;text-align:right;">+161.94</div><div class="b" style="left:32px;top:523px;width:998px;height:27px;background:#fdfdfd;border-top:1px solid #e6e6e6;border-left:1px solid #e1dfdd;border-right:1px solid #e1dfdd;"></div><div class="t" style="top:530.00px;font-size:17.5px;line-height:17.5px;color:#252423;font-weight:400;font-family:'Liberation Sans', sans-serif;letter-spacing:-0.546px;left:42.5px;">Cameras and...</div><div class="t" style="top:530.00px;font-size:17.5px;line-height:17.5px;color:#252423;font-weight:400;font-family:'Liberation Sans', sans-serif;left:174px;">Digital SLR Cameras</div><div class="t" style="top:531.00px;font-size:17.5px;line-height:17.5px;color:#252423;font-weight:400;font-family:'Liberation Mono', monospace;letter-spacing:-0.95px;left:-243.5px;width:800px;text-align:right;">618.20</div><div class="t" style="top:531.00px;font-size:17.5px;line-height:17.5px;color:#252423;font-weight:400;font-family:'Liberation Mono', monospace;letter-spacing:-0.95px;left:-90.5px;width:800px;text-align:right;">397.02</div><div class="t" style="top:531.00px;font-size:17.5px;line-height:17.5px;color:#252423;font-weight:400;font-family:'Liberation Mono', monospace;letter-spacing:-0.95px;left:51.5px;width:800px;text-align:right;">1,167.70</div><div class="t" style="top:531.00px;font-size:17.5px;line-height:17.5px;color:#252423;font-weight:400;font-family:'Liberation Mono', monospace;letter-spacing:-0.95px;left:223.5px;width:800px;text-align:right;">+770.69</div><div class="b" style="left:32px;top:550px;width:998px;height:26px;background:#f3f3f3;border-top:1px solid #e6e6e6;border-left:1px solid #e1dfdd;border-right:1px solid #e1dfdd;"></div><div class="t" style="top:557.00px;font-size:17.5px;line-height:17.5px;color:#252423;font-weight:400;font-family:'Liberation Sans', sans-serif;left:42.5px;">Cell phones</div><div class="t" style="top:557.00px;font-size:17.5px;line-height:17.5px;color:#252423;font-weight:400;font-family:'Liberation Sans', sans-serif;left:174px;">Cell phones Accessories</div><div class="t" style="top:558.00px;font-size:17.5px;line-height:17.5px;color:#252423;font-weight:400;font-family:'Liberation Mono', monospace;letter-spacing:-0.95px;left:-243.5px;width:800px;text-align:right;">9.64</div><div class="t" style="top:558.00px;font-size:17.5px;line-height:17.5px;color:#252423;font-weight:400;font-family:'Liberation Mono', monospace;letter-spacing:-0.95px;left:-90.5px;width:800px;text-align:right;">19.64</div><div class="t" style="top:558.00px;font-size:17.5px;line-height:17.5px;color:#252423;font-weight:400;font-family:'Liberation Mono', monospace;letter-spacing:-0.95px;left:51.5px;width:800px;text-align:right;">18.70</div><div class="t" style="top:558.00px;font-size:17.5px;line-height:17.5px;color:#252423;font-weight:400;font-family:'Liberation Mono', monospace;letter-spacing:-0.95px;left:223.5px;width:800px;text-align:right;">-0.94</div><div class="b" style="left:32px;top:576px;width:998px;height:27px;background:#fdfdfd;border-top:1px solid #e6e6e6;border-left:1px solid #e1dfdd;border-right:1px solid #e1dfdd;"></div><div class="t" style="top:584.00px;font-size:17.5px;line-height:17.5px;color:#252423;font-weight:400;font-family:'Liberation Sans', sans-serif;left:42.5px;">Cell phones</div><div class="t" style="top:584.00px;font-size:17.5px;line-height:17.5px;color:#252423;font-weight:400;font-family:'Liberation Sans', sans-serif;left:174px;">Home &amp; Office Phones</div><div class="t" style="top:585.00px;font-size:17.5px;line-height:17.5px;color:#252423;font-weight:400;font-family:'Liberation Mono', monospace;letter-spacing:-0.95px;left:-243.5px;width:800px;text-align:right;">40.28</div><div class="t" style="top:585.00px;font-size:17.5px;line-height:17.5px;color:#252423;font-weight:400;font-family:'Liberation Mono', monospace;letter-spacing:-0.95px;left:-90.5px;width:800px;text-align:right;">79.98</div><div class="t" style="top:585.00px;font-size:17.5px;line-height:17.5px;color:#252423;font-weight:400;font-family:'Liberation Mono', monospace;letter-spacing:-0.95px;left:51.5px;width:800px;text-align:right;">76.17</div><div class="t" style="top:585.00px;font-size:17.5px;line-height:17.5px;color:#252423;font-weight:400;font-family:'Liberation Mono', monospace;letter-spacing:-0.95px;left:223.5px;width:800px;text-align:right;">-3.81</div><div class="b" style="left:32px;top:603px;width:998px;height:27px;background:#f3f3f3;border-top:1px solid #e6e6e6;border-left:1px solid #e1dfdd;border-right:1px solid #e1dfdd;"></div><div class="t" style="top:611.00px;font-size:17.5px;line-height:17.5px;color:#252423;font-weight:400;font-family:'Liberation Sans', sans-serif;left:42.5px;">Cell phones</div><div class="t" style="top:611.00px;font-size:17.5px;line-height:17.5px;color:#252423;font-weight:400;font-family:'Liberation Sans', sans-serif;left:174px;">Smart phones &amp; PDAs</div><div class="t" style="top:612.00px;font-size:17.5px;line-height:17.5px;color:#252423;font-weight:400;font-family:'Liberation Mono', monospace;letter-spacing:-0.95px;left:-243.5px;width:800px;text-align:right;">241.11</div><div class="t" style="top:612.00px;font-size:17.5px;line-height:17.5px;color:#252423;font-weight:400;font-family:'Liberation Mono', monospace;letter-spacing:-0.95px;left:-90.5px;width:800px;text-align:right;">508.63</div><div class="t" style="top:612.00px;font-size:17.5px;line-height:17.5px;color:#252423;font-weight:400;font-family:'Liberation Mono', monospace;letter-spacing:-0.95px;left:51.5px;width:800px;text-align:right;">484.41</div><div class="t" style="top:612.00px;font-size:17.5px;line-height:17.5px;color:#252423;font-weight:400;font-family:'Liberation Mono', monospace;letter-spacing:-0.95px;left:223.5px;width:800px;text-align:right;">-24.22</div><div class="b" style="left:32px;top:630px;width:998px;height:27px;background:#fdfdfd;border-top:1px solid #e6e6e6;border-left:1px solid #e1dfdd;border-right:1px solid #e1dfdd;"></div><div class="t" style="top:638.00px;font-size:17.5px;line-height:17.5px;color:#252423;font-weight:400;font-family:'Liberation Sans', sans-serif;left:42.5px;">Cell phones</div><div class="t" style="top:638.00px;font-size:17.5px;line-height:17.5px;color:#252423;font-weight:400;font-family:'Liberation Sans', sans-serif;left:174px;">Touch Screen Phones</div><div class="t" style="top:639.00px;font-size:17.5px;line-height:17.5px;color:#252423;font-weight:400;font-family:'Liberation Mono', monospace;letter-spacing:-0.95px;left:-243.5px;width:800px;text-align:right;">267.74</div><div class="t" style="top:639.00px;font-size:17.5px;line-height:17.5px;color:#252423;font-weight:400;font-family:'Liberation Mono', monospace;letter-spacing:-0.95px;left:-90.5px;width:800px;text-align:right;">543.99</div><div class="t" style="top:639.00px;font-size:17.5px;line-height:17.5px;color:#252423;font-weight:400;font-family:'Liberation Mono', monospace;letter-spacing:-0.95px;left:51.5px;width:800px;text-align:right;">518.09</div><div class="t" style="top:639.00px;font-size:17.5px;line-height:17.5px;color:#252423;font-weight:400;font-family:'Liberation Mono', monospace;letter-spacing:-0.95px;left:223.5px;width:800px;text-align:right;">-25.90</div><div class="b" style="left:32px;top:657px;width:998px;height:27px;background:#dde8f3;border-top:1px solid #e6e6e6;border-left:1px solid #e1dfdd;border-right:1px solid #e1dfdd;"></div><div class="t" style="top:665.00px;font-size:17.5px;line-height:17.5px;color:#252423;font-weight:400;font-family:'Liberation Sans', sans-serif;left:42.5px;">Computers</div><div class="t" style="top:665.00px;font-size:17.5px;line-height:17.5px;color:#252423;font-weight:400;font-family:'Liberation Sans', sans-serif;left:174px;">Other Accessories</div><div class="t" style="top:666.00px;font-size:17.5px;line-height:17.5px;color:#252423;font-weight:400;font-family:'Liberation Mono', monospace;letter-spacing:-0.95px;left:-243.5px;width:800px;text-align:right;">572.23</div><div class="t" style="top:666.00px;font-size:17.5px;line-height:17.5px;color:#252423;font-weight:400;font-family:'Liberation Mono', monospace;letter-spacing:-0.95px;left:-90.5px;width:800px;text-align:right;">220.44</div><div class="t" style="top:666.00px;font-size:17.5px;line-height:17.5px;color:#252423;font-weight:400;font-family:'Liberation Mono', monospace;letter-spacing:-0.95px;left:51.5px;width:800px;text-align:right;">700.04</div><div class="t" style="top:666.00px;font-size:17.5px;line-height:17.5px;color:#252423;font-weight:400;font-family:'Liberation Mono', monospace;letter-spacing:-0.95px;left:223.5px;width:800px;text-align:right;">+479.59</div><div class="b" style="left:32px;top:684px;width:998px;height:27px;background:#fdfdfd;border-top:1px solid #e6e6e6;border-left:1px solid #e1dfdd;border-right:1px solid #e1dfdd;"></div><div class="t" style="top:692.00px;font-size:17.5px;line-height:17.5px;color:#252423;font-weight:400;font-family:'Liberation Sans', sans-serif;left:42.5px;">Computers</div><div class="t" style="top:692.00px;font-size:17.5px;line-height:17.5px;color:#252423;font-weight:400;font-family:'Liberation Sans', sans-serif;left:174px;">Computers Accessories</div><div class="t" style="top:693.00px;font-size:17.5px;line-height:17.5px;color:#252423;font-weight:400;font-family:'Liberation Mono', monospace;letter-spacing:-0.95px;left:-243.5px;width:800px;text-align:right;">572.23</div><div class="t" style="top:693.00px;font-size:17.5px;line-height:17.5px;color:#252423;font-weight:400;font-family:'Liberation Mono', monospace;letter-spacing:-0.95px;left:-90.5px;width:800px;text-align:right;">329.02</div><div class="t" style="top:693.00px;font-size:17.5px;line-height:17.5px;color:#252423;font-weight:400;font-family:'Liberation Mono', monospace;letter-spacing:-0.95px;left:51.5px;width:800px;text-align:right;">700.04</div><div class="t" style="top:693.00px;font-size:17.5px;line-height:17.5px;color:#252423;font-weight:400;font-family:'Liberation Mono', monospace;letter-spacing:-0.95px;left:223.5px;width:800px;text-align:right;">+371.02</div><div class="b" style="left:32px;top:711px;width:998px;height:27px;background:#f3f3f3;border-top:1px solid #e6e6e6;border-left:1px solid #e1dfdd;border-right:1px solid #e1dfdd;"></div><div class="t" style="top:719.00px;font-size:17.5px;line-height:17.5px;color:#252423;font-weight:400;font-family:'Liberation Sans', sans-serif;left:42.5px;">Computers</div><div class="t" style="top:719.00px;font-size:17.5px;line-height:17.5px;color:#252423;font-weight:400;font-family:'Liberation Sans', sans-serif;left:174px;">Desktops</div><div class="t" style="top:720.00px;font-size:17.5px;line-height:17.5px;color:#252423;font-weight:400;font-family:'Liberation Mono', monospace;letter-spacing:-0.95px;left:-243.5px;width:800px;text-align:right;">884.58</div><div class="t" style="top:720.00px;font-size:17.5px;line-height:17.5px;color:#252423;font-weight:400;font-family:'Liberation Mono', monospace;letter-spacing:-0.95px;left:-90.5px;width:800px;text-align:right;">220.44</div><div class="t" style="top:720.00px;font-size:17.5px;line-height:17.5px;color:#252423;font-weight:400;font-family:'Liberation Mono', monospace;letter-spacing:-0.95px;left:51.5px;width:800px;text-align:right;">1,049.73</div><div class="t" style="top:720.00px;font-size:17.5px;line-height:17.5px;color:#252423;font-weight:400;font-family:'Liberation Mono', monospace;letter-spacing:-0.95px;left:223.5px;width:800px;text-align:right;">+829.28</div><div class="b" style="left:32px;top:738px;width:998px;height:27px;background:#fdfdfd;border-top:1px solid #e6e6e6;border-left:1px solid #e1dfdd;border-right:1px solid #e1dfdd;"></div><div class="t" style="top:746.00px;font-size:17.5px;line-height:17.5px;color:#252423;font-weight:400;font-family:'Liberation Sans', sans-serif;left:42.5px;">Computers</div><div class="t" style="top:746.00px;font-size:17.5px;line-height:17.5px;color:#252423;font-weight:400;font-family:'Liberation Sans', sans-serif;left:174px;">Laptops</div><div class="t" style="top:747.00px;font-size:17.5px;line-height:17.5px;color:#252423;font-weight:400;font-family:'Liberation Mono', monospace;letter-spacing:-0.95px;left:-243.5px;width:800px;text-align:right;">3,103.74</div><div class="t" style="top:747.00px;font-size:17.5px;line-height:17.5px;color:#252423;font-weight:400;font-family:'Liberation Mono', monospace;letter-spacing:-0.95px;left:-90.5px;width:800px;text-align:right;">4,677.17</div><div class="t" style="top:747.00px;font-size:17.5px;line-height:17.5px;color:#252423;font-weight:400;font-family:'Liberation Mono', monospace;letter-spacing:-0.95px;left:51.5px;width:800px;text-align:right;">3,771.91</div><div class="t" style="top:747.00px;font-size:17.5px;line-height:17.5px;color:#252423;font-weight:400;font-family:'Liberation Mono', monospace;letter-spacing:-0.95px;left:223.5px;width:800px;text-align:right;">-905.26</div><div class="b" style="left:32px;top:765px;width:998px;height:27px;background:#f3f3f3;border-top:1px solid #e6e6e6;border-left:1px solid #e1dfdd;border-right:1px solid #e1dfdd;"></div><div class="t" style="top:773.00px;font-size:17.5px;line-height:17.5px;color:#252423;font-weight:400;font-family:'Liberation Sans', sans-serif;left:42.5px;">Computers</div><div class="t" style="top:773.00px;font-size:17.5px;line-height:17.5px;color:#252423;font-weight:400;font-family:'Liberation Sans', sans-serif;left:174px;">Monitors</div><div class="t" style="top:774.00px;font-size:17.5px;line-height:17.5px;color:#252423;font-weight:400;font-family:'Liberation Mono', monospace;letter-spacing:-0.95px;left:-243.5px;width:800px;text-align:right;">1,732.07</div><div class="t" style="top:774.00px;font-size:17.5px;line-height:17.5px;color:#252423;font-weight:400;font-family:'Liberation Mono', monospace;letter-spacing:-0.95px;left:-90.5px;width:800px;text-align:right;">258.70</div><div class="t" style="top:774.00px;font-size:17.5px;line-height:17.5px;color:#252423;font-weight:400;font-family:'Liberation Mono', monospace;letter-spacing:-0.95px;left:51.5px;width:800px;text-align:right;">2,155.86</div><div class="t" style="top:774.00px;font-size:17.5px;line-height:17.5px;color:#252423;font-weight:400;font-family:'Liberation Mono', monospace;letter-spacing:-0.95px;left:223.5px;width:800px;text-align:right;">+1,897.16</div><div class="b" style="left:32px;top:792px;width:998px;height:27px;background:#fdfdfd;border-top:1px solid #e6e6e6;border-left:1px solid #e1dfdd;border-right:1px solid #e1dfdd;"></div><div class="t" style="top:800.00px;font-size:17.5px;line-height:17.5px;color:#252423;font-weight:400;font-family:'Liberation Sans', sans-serif;left:42.5px;">Computers</div><div class="t" style="top:800.00px;font-size:17.5px;line-height:17.5px;color:#252423;font-weight:400;font-family:'Liberation Sans', sans-serif;left:174px;">Printers, Scanners &amp; Fax</div><div class="t" style="top:801.00px;font-size:17.5px;line-height:17.5px;color:#252423;font-weight:400;font-family:'Liberation Mono', monospace;letter-spacing:-0.95px;left:-243.5px;width:800px;text-align:right;">1,000.66</div><div class="t" style="top:801.00px;font-size:17.5px;line-height:17.5px;color:#252423;font-weight:400;font-family:'Liberation Mono', monospace;letter-spacing:-0.95px;left:-90.5px;width:800px;text-align:right;">2,622.86</div><div class="t" style="top:801.00px;font-size:17.5px;line-height:17.5px;color:#252423;font-weight:400;font-family:'Liberation Mono', monospace;letter-spacing:-0.95px;left:51.5px;width:800px;text-align:right;">1,219.93</div><div class="t" style="top:801.00px;font-size:17.5px;line-height:17.5px;color:#252423;font-weight:400;font-family:'Liberation Mono', monospace;letter-spacing:-0.95px;left:223.5px;width:800px;text-align:right;">-1,402.93</div><div class="b" style="left:32px;top:819px;width:998px;height:27px;background:#f3f3f3;border-top:1px solid #e6e6e6;border-left:1px solid #e1dfdd;border-right:1px solid #e1dfdd;"></div><div class="t" style="top:827.00px;font-size:17.5px;line-height:17.5px;color:#252423;font-weight:400;font-family:'Liberation Sans', sans-serif;left:42.5px;">Computers</div><div class="t" style="top:827.00px;font-size:17.5px;line-height:17.5px;color:#252423;font-weight:400;font-family:'Liberation Sans', sans-serif;left:174px;">Projectors &amp; Screens</div><div class="t" style="top:828.00px;font-size:17.5px;line-height:17.5px;color:#252423;font-weight:400;font-family:'Liberation Mono', monospace;letter-spacing:-0.95px;left:-243.5px;width:800px;text-align:right;">4,973.97</div><div class="t" style="top:828.00px;font-size:17.5px;line-height:17.5px;color:#252423;font-weight:400;font-family:'Liberation Mono', monospace;letter-spacing:-0.95px;left:-90.5px;width:800px;text-align:right;">8,741.41</div><div class="t" style="top:828.00px;font-size:17.5px;line-height:17.5px;color:#252423;font-weight:400;font-family:'Liberation Mono', monospace;letter-spacing:-0.95px;left:51.5px;width:800px;text-align:right;">5,946.54</div><div class="t" style="top:828.00px;font-size:17.5px;line-height:17.5px;color:#252423;font-weight:400;font-family:'Liberation Mono', monospace;letter-spacing:-0.95px;left:223.5px;width:800px;text-align:right;">-2,794.87</div><div class="b" style="left:32px;top:846px;width:998px;height:27px;background:#fdfdfd;border-top:1px solid #e6e6e6;border-left:1px solid #e1dfdd;border-right:1px solid #e1dfdd;"></div><div class="t" style="top:854.00px;font-size:17.5px;line-height:17.5px;color:#252423;font-weight:400;font-family:'Liberation Sans', sans-serif;letter-spacing:-0.739px;left:42.5px;">Games and T...</div><div class="t" style="top:854.00px;font-size:17.5px;line-height:17.5px;color:#252423;font-weight:400;font-family:'Liberation Sans', sans-serif;left:174px;">Boxed Games</div><div class="t" style="top:855.00px;font-size:17.5px;line-height:17.5px;color:#252423;font-weight:400;font-family:'Liberation Mono', monospace;letter-spacing:-0.95px;left:-243.5px;width:800px;text-align:right;">4.99</div><div class="t" style="top:855.00px;font-size:17.5px;line-height:17.5px;color:#252423;font-weight:400;font-family:'Liberation Mono', monospace;letter-spacing:-0.95px;left:-90.5px;width:800px;text-align:right;">10.30</div><div class="t" style="top:855.00px;font-size:17.5px;line-height:17.5px;color:#252423;font-weight:400;font-family:'Liberation Mono', monospace;letter-spacing:-0.95px;left:51.5px;width:800px;text-align:right;">9.81</div><div class="t" style="top:855.00px;font-size:17.5px;line-height:17.5px;color:#252423;font-weight:400;font-family:'Liberation Mono', monospace;letter-spacing:-0.95px;left:223.5px;width:800px;text-align:right;">-0.49</div><div class="b" style="left:32px;top:873px;width:998px;height:27px;background:#f3f3f3;border-top:1px solid #e6e6e6;border-left:1px solid #e1dfdd;border-right:1px solid #e1dfdd;"></div><div class="t" style="top:881.00px;font-size:17.5px;line-height:17.5px;color:#252423;font-weight:400;font-family:'Liberation Sans', sans-serif;letter-spacing:-0.739px;left:42.5px;">Games and T...</div><div class="t" style="top:881.00px;font-size:17.5px;line-height:17.5px;color:#252423;font-weight:400;font-family:'Liberation Sans', sans-serif;left:174px;">Download Games</div><div class="t" style="top:882.00px;font-size:17.5px;line-height:17.5px;color:#252423;font-weight:400;font-family:'Liberation Mono', monospace;letter-spacing:-0.95px;left:-243.5px;width:800px;text-align:right;">78.55</div><div class="t" style="top:882.00px;font-size:17.5px;line-height:17.5px;color:#252423;font-weight:400;font-family:'Liberation Mono', monospace;letter-spacing:-0.95px;left:-90.5px;width:800px;text-align:right;">166.90</div><div class="t" style="top:882.00px;font-size:17.5px;line-height:17.5px;color:#252423;font-weight:400;font-family:'Liberation Mono', monospace;letter-spacing:-0.95px;left:51.5px;width:800px;text-align:right;">158.96</div><div class="t" style="top:882.00px;font-size:17.5px;line-height:17.5px;color:#252423;font-weight:400;font-family:'Liberation Mono', monospace;letter-spacing:-0.95px;left:223.5px;width:800px;text-align:right;">-7.95</div><div class="b" style="left:32px;top:900px;width:998px;height:27px;background:#fdfdfd;border-top:1px solid #e6e6e6;border-left:1px solid #e1dfdd;border-right:1px solid #e1dfdd;"></div><div class="t" style="top:908.00px;font-size:17.5px;line-height:17.5px;color:#252423;font-weight:400;font-family:'Liberation Sans', sans-serif;letter-spacing:-0.272px;left:42.5px;">Home Applia...</div><div class="t" style="top:908.00px;font-size:17.5px;line-height:17.5px;color:#252423;font-weight:400;font-family:'Liberation Sans', sans-serif;left:174px;">Air Conditioners</div><div class="t" style="top:909.00px;font-size:17.5px;line-height:17.5px;color:#252423;font-weight:400;font-family:'Liberation Mono', monospace;letter-spacing:-0.95px;left:-243.5px;width:800px;text-align:right;">347.28</div><div class="t" style="top:909.00px;font-size:17.5px;line-height:17.5px;color:#252423;font-weight:400;font-family:'Liberation Mono', monospace;letter-spacing:-0.95px;left:-90.5px;width:800px;text-align:right;">629.99</div><div class="t" style="top:909.00px;font-size:17.5px;line-height:17.5px;color:#252423;font-weight:400;font-family:'Liberation Mono', monospace;letter-spacing:-0.95px;left:51.5px;width:800px;text-align:right;">599.99</div><div class="t" style="top:909.00px;font-size:17.5px;line-height:17.5px;color:#252423;font-weight:400;font-family:'Liberation Mono', monospace;letter-spacing:-0.95px;left:223.5px;width:800px;text-align:right;">-30.00</div><div class="b" style="left:32px;top:927px;width:998px;height:27px;background:#f3f3f3;border-top:1px solid #e6e6e6;border-left:1px solid #e1dfdd;border-right:1px solid #e1dfdd;"></div><div class="t" style="top:935.00px;font-size:17.5px;line-height:17.5px;color:#252423;font-weight:400;font-family:'Liberation Sans', sans-serif;letter-spacing:-0.272px;left:42.5px;">Home Applia...</div><div class="t" style="top:935.00px;font-size:17.5px;line-height:17.5px;color:#252423;font-weight:400;font-family:'Liberation Sans', sans-serif;left:174px;">Coffee Machines</div><div class="t" style="top:936.00px;font-size:17.5px;line-height:17.5px;color:#252423;font-weight:400;font-family:'Liberation Mono', monospace;letter-spacing:-0.95px;left:-243.5px;width:800px;text-align:right;">560.44</div><div class="t" style="top:936.00px;font-size:17.5px;line-height:17.5px;color:#252423;font-weight:400;font-family:'Liberation Mono', monospace;letter-spacing:-0.95px;left:-90.5px;width:800px;text-align:right;">860.15</div><div class="t" style="top:936.00px;font-size:17.5px;line-height:17.5px;color:#252423;font-weight:400;font-family:'Liberation Mono', monospace;letter-spacing:-0.95px;left:51.5px;width:800px;text-align:right;">1,036.32</div><div class="t" style="top:936.00px;font-size:17.5px;line-height:17.5px;color:#252423;font-weight:400;font-family:'Liberation Mono', monospace;letter-spacing:-0.95px;left:223.5px;width:800px;text-align:right;">+176.17</div><div class="b" style="left:32px;top:954px;width:998px;height:27px;background:#fdfdfd;border-top:1px solid #e6e6e6;border-left:1px solid #e1dfdd;border-right:1px solid #e1dfdd;"></div><div class="t" style="top:961.00px;font-size:17.5px;line-height:17.5px;color:#252423;font-weight:400;font-family:'Liberation Sans', sans-serif;letter-spacing:-0.272px;left:42.5px;">Home Applia...</div><div class="t" style="top:961.00px;font-size:17.5px;line-height:17.5px;color:#252423;font-weight:400;font-family:'Liberation Sans', sans-serif;left:174px;">Fans</div><div class="t" style="top:962.00px;font-size:17.5px;line-height:17.5px;color:#252423;font-weight:400;font-family:'Liberation Mono', monospace;letter-spacing:-0.95px;left:-243.5px;width:800px;text-align:right;">101.42</div><div class="t" style="top:962.00px;font-size:17.5px;line-height:17.5px;color:#252423;font-weight:400;font-family:'Liberation Mono', monospace;letter-spacing:-0.95px;left:-90.5px;width:800px;text-align:right;">194.03</div><div class="t" style="top:962.00px;font-size:17.5px;line-height:17.5px;color:#252423;font-weight:400;font-family:'Liberation Mono', monospace;letter-spacing:-0.95px;left:51.5px;width:800px;text-align:right;">184.79</div><div class="t" style="top:962.00px;font-size:17.5px;line-height:17.5px;color:#252423;font-weight:400;font-family:'Liberation Mono', monospace;letter-spacing:-0.95px;left:223.5px;width:800px;text-align:right;">-9.24</div><div class="b" style="left:32px;top:981px;width:998px;height:27px;background:#f3f3f3;border-top:1px solid #e6e6e6;border-left:1px solid #e1dfdd;border-right:1px solid #e1dfdd;"></div><div class="t" style="top:988.00px;font-size:17.5px;line-height:17.5px;color:#252423;font-weight:400;font-family:'Liberation Sans', sans-serif;letter-spacing:-0.272px;left:42.5px;">Home Applia...</div><div class="t" style="top:988.00px;font-size:17.5px;line-height:17.5px;color:#252423;font-weight:400;font-family:'Liberation Sans', sans-serif;left:174px;">Lamps</div><div class="t" style="top:989.00px;font-size:17.5px;line-height:17.5px;color:#252423;font-weight:400;font-family:'Liberation Mono', monospace;letter-spacing:-0.95px;left:-243.5px;width:800px;text-align:right;">517.56</div><div class="t" style="top:989.00px;font-size:17.5px;line-height:17.5px;color:#252423;font-weight:400;font-family:'Liberation Mono', monospace;letter-spacing:-0.95px;left:-90.5px;width:800px;text-align:right;">1,225.60</div><div class="t" style="top:989.00px;font-size:17.5px;line-height:17.5px;color:#252423;font-weight:400;font-family:'Liberation Mono', monospace;letter-spacing:-0.95px;left:51.5px;width:800px;text-align:right;">988.39</div><div class="t" style="top:989.00px;font-size:17.5px;line-height:17.5px;color:#252423;font-weight:400;font-family:'Liberation Mono', monospace;letter-spacing:-0.95px;left:223.5px;width:800px;text-align:right;">-237.21</div><div class="b" style="left:32px;top:1007px;width:998px;height:1px;background:#e1dfdd;"></div><div class="b" style="left:164px;top:271px;width:1px;height:736px;background:#e6e6e6;"></div><div class="b" style="left:562px;top:271px;width:1px;height:736px;background:#e6e6e6;"></div><div class="b" style="left:715px;top:271px;width:1px;height:736px;background:#e6e6e6;"></div><div class="b" style="left:857px;top:271px;width:1px;height:736px;background:#e6e6e6;"></div><div class="b" style="left:382px;top:271px;width:2px;height:736px;background:#a19f9d;"></div><div class="b" style="left:32px;top:658px;width:998px;height:27px;border:2px solid #2b87d8;"></div><svg class="b" style="left:355px;top:665px" width="18" height="18" viewBox="0 0 18 18" fill="none"><path d="M3 15.5 L3.8 12 L12.5 3.3 A1.7 1.7 0 0 1 14.9 5.7 L6.2 14.4 Z M11.3 4.5 L13.7 6.9" stroke="#605e5c" stroke-width="1.3" stroke-linejoin="round"/></svg><div class="b" style="left:11px;top:1027px;width:1459px;height:1px;background:#e1dfdd;"></div><div class="t" style="top:1039.00px;font-size:17px;line-height:17px;color:#252423;font-weight:400;font-family:'Liberation Sans', sans-serif;letter-spacing:0.26px;left:11.5px;">Total rows: 34</div><div class="t" style="top:1039.00px;font-size:17px;line-height:17px;color:#252423;font-weight:400;font-family:'Liberation Sans', sans-serif;letter-spacing:-0.168px;left:139px;">Sum:</div><div class="t" style="top:1040.00px;font-size:17.5px;line-height:17.5px;color:#252423;font-weight:400;font-family:'Liberation Mono', monospace;letter-spacing:-0.6px;left:185px;">1.97m</div><div class="t" style="top:1039.00px;font-size:17px;line-height:17px;color:#252423;font-weight:400;font-family:'Liberation Sans', sans-serif;letter-spacing:0.324px;left:252px;">Avg:</div><div class="t" style="top:1040.00px;font-size:17.5px;line-height:17.5px;color:#252423;font-weight:400;font-family:'Liberation Mono', monospace;letter-spacing:-0.857px;left:292px;">493.08k</div><div class="t" style="top:1039.00px;font-size:17px;line-height:17px;color:#252423;font-weight:400;font-family:'Liberation Sans', sans-serif;letter-spacing:0.594px;left:378.5px;">Count: 4</div><svg class="b" style="left:0;top:1020" width="1918" height="60" viewBox="0 1020 1918 60" fill="none">
<path d="M466.5 1047.5 C471 1041.5 480 1041.5 484.5 1047.5 C480 1053.5 471 1053.5 466.5 1047.5 Z" stroke="#323130" stroke-width="1.4"/>
<circle cx="475.5" cy="1047.5" r="2.6" stroke="#323130" stroke-width="1.4"/>
<path d="M467 1040 L484 1055" stroke="#fdfdfd" stroke-width="3"/>
<path d="M467 1040 L484 1055" stroke="#323130" stroke-width="1.4"/>
<!-- gear -->
<path d="M875.70 1044.72 L878.71 1045.38 L878.71 1050.62 L875.70 1051.28 L875.47 1051.84 L877.13 1054.43 L873.43 1058.13 L870.84 1056.47 L870.28 1056.70 L869.62 1059.71 L864.38 1059.71 L863.72 1056.70 L863.16 1056.47 L860.57 1058.13 L856.87 1054.43 L858.53 1051.84 L858.30 1051.28 L855.29 1050.62 L855.29 1045.38 L858.30 1044.72 L858.53 1044.16 L856.87 1041.57 L860.57 1037.87 L863.16 1039.53 L863.72 1039.30 L864.38 1036.29 L869.62 1036.29 L870.28 1039.30 L870.84 1039.53 L873.43 1037.87 L877.13 1041.57 L875.47 1044.16 Z" stroke="#323130" stroke-width="1.3" stroke-linejoin="round"/>
<circle cx="867" cy="1048" r="4.6" stroke="#1f6fc7" stroke-width="1.6"/>
<path d="M895 1049.5 H910" stroke="#323130" stroke-width="1.8"/>
<path d="M1013 1050 H1029 M1021 1042 V1058" stroke="#323130" stroke-width="1.8"/>
<path d="M1058.5 1040 V1055" stroke="#a19f9d" stroke-width="1.8"/>
<path d="M1072 1040 L1064 1047.5 L1072 1055" stroke="#a19f9d" stroke-width="1.8"/>
<path d="M1092 1040 L1084 1047.5 L1092 1055" stroke="#a19f9d" stroke-width="1.8"/>
<path d="M1226.5 1040.5 L1234 1048 L1226.5 1055.5" stroke="#252423" stroke-width="2.2"/>
<path d="M1245 1040.5 L1252.5 1048 L1245 1055.5" stroke="#252423" stroke-width="2.2"/>
<path d="M1259.5 1040 V1055.5" stroke="#252423" stroke-width="2.2"/>
</svg><div class="b" style="left:922px;top:1036px;width:83px;height:29px;border:1.5px solid #8a8886;"></div><div class="t" style="top:1044.00px;font-size:17px;line-height:17px;color:#252423;font-weight:400;font-family:'Liberation Sans', sans-serif;letter-spacing:-0.438px;left:941.5px;">100 %</div><div class="t" style="top:1039.00px;font-size:17px;line-height:17px;color:#252423;font-weight:400;font-family:'Liberation Sans', sans-serif;letter-spacing:-0.926px;left:1101px;">Page</div><div class="b" style="left:1144px;top:1032px;width:37px;height:30px;border:1px solid #e1dfdd;"></div><div class="t" style="top:1039.00px;font-size:17px;line-height:17px;color:#252423;font-weight:400;font-family:'Liberation Sans', sans-serif;left:1159px;">1</div><div class="t" style="top:1039.00px;font-size:17px;line-height:17px;color:#252423;font-weight:400;font-family:'Liberation Sans', sans-serif;letter-spacing:0.414px;left:1187.5px;">of 2</div><div class="t" style="top:1039.00px;font-size:17px;line-height:17px;color:#252423;font-weight:400;font-family:'Liberation Sans', sans-serif;left:1331px;">1</div><div class="t" style="top:1039.00px;font-size:17px;line-height:17px;color:#252423;font-weight:400;font-family:'Liberation Sans', sans-serif;letter-spacing:0.414px;left:1348.7px;">to</div><div class="t" style="top:1039.00px;font-size:17px;line-height:17px;color:#252423;font-weight:400;font-family:'Liberation Sans', sans-serif;letter-spacing:-0.453px;left:1372.3px;">25</div><div class="t" style="top:1039.00px;font-size:17px;line-height:17px;color:#252423;font-weight:400;font-family:'Liberation Sans', sans-serif;letter-spacing:0.714px;left:1399.4px;">of</div><div class="t" style="top:1039.00px;font-size:17px;line-height:17px;color:#252423;font-weight:400;font-family:'Liberation Sans', sans-serif;letter-spacing:0.047px;left:1423px;">34</div><div class="b" style="left:951px;top:1069px;width:21px;height:3px;background:#a8a8a8;"></div><div class="b" style="left:5px;top:1059px;width:3px;height:14px;background:#a8a8a8;"></div><div class="b" style="left:5px;top:1069px;width:14px;height:4px;background:#a8a8a8;"></div><div class="b" style="left:5px;top:0px;width:3px;height:12px;background:#a8a8a8;"></div><div class="b" style="left:5px;top:0px;width:14px;height:2px;background:#a8a8a8;"></div><div class="b" style="left:1915px;top:1059px;width:3px;height:14px;background:#a8a8a8;"></div><div class="b" style="left:1904px;top:1070px;width:14px;height:3px;background:#a8a8a8;"></div><div class="b" style="left:1472px;top:1067px;width:446px;height:1px;background:#e8e8e8;"></div><div class="t" style="top:38.00px;font-size:29px;line-height:29px;color:#252423;font-weight:400;font-family:'Liberation Sans', sans-serif;letter-spacing:-0.04px;left:1541.5px;">Calculated Row</div><svg class="b" style="left:0;top:0" width="1918" height="800" viewBox="0 0 1918 800" fill="none">
<path d="M1509.5 44.5 L1500.5 53.5 L1509.5 62.5" stroke="#323130" stroke-width="1.5"/>
<circle cx="1761" cy="51.5" r="8" stroke="#323130" stroke-width="1.3"/>
<path d="M1761 49.5 V56.5" stroke="#323130" stroke-width="1.6"/><circle cx="1761" cy="46.7" r="1" fill="#323130"/>
<path d="M1880 50 L1896.5 66.5 M1896.5 50 L1880 66.5" stroke="#323130" stroke-width="1.8"/>
<path d="M1792 11.5 H1813 M1795.5 18.5 H1809.5 M1799.5 25.5 H1805.5" stroke="#605e5c" stroke-width="1.6"/>
<path d="M1846 11.5 H1840.5 V29 H1859.5 V23.5" stroke="#605e5c" stroke-width="1.6"/>
<path d="M1840.5 20 H1849 V29" stroke="#605e5c" stroke-width="1.6"/>
<path d="M1849 21 L1859.5 10.5 M1853 10.5 H1859.5 V17" stroke="#605e5c" stroke-width="1.6"/>
<circle cx="1890.8" cy="18.6" r="2.1" fill="#555"/><circle cx="1897.6" cy="18.6" r="2.1" fill="#555"/><circle cx="1904.4" cy="18.6" r="2.1" fill="#555"/>
<path d="M1848 238 L1863 223 M1848 238 v-6.5 M1848 238 h6.5 M1863 223 h-6.5 M1863 223 v6.5" stroke="#323130" stroke-width="1.5"/>
<path d="M1501.5 546 C1498.5 543.5 1497.8 540.5 1498.2 538.5 A6 6 0 0 1 1510 538.5 C1510.4 540.5 1509.5 543.5 1506.5 546 V548 H1501.5 Z" stroke="#605e5c" stroke-width="1.3"/>
<path d="M1502 550.5 H1506" stroke="#605e5c" stroke-width="1.3"/>
</svg><div class="b" style="left:1901px;top:88px;width:10px;height:739px;background:#b0b0b0;border-radius:5px;"></div><div class="b" style="left:1901px;top:827px;width:10px;height:141px;background:#f8f8f8;border-radius:0 0 5px 5px;"></div><div class="t" style="top:119.00px;font-size:17px;line-height:17px;color:#323130;font-weight:700;font-family:'Liberation Sans', sans-serif;letter-spacing:-0.025px;left:1496.5px;">Title</div><div class="t" style="top:119.00px;font-size:17px;line-height:17px;color:#a4262c;font-weight:700;font-family:'Liberation Sans', sans-serif;left:1531px;">*</div><div class="b" style="left:1495px;top:148px;width:382px;height:51px;background:#fdfdfd;border:2px solid #e1e1e1;"></div><div class="t" style="top:168.00px;font-size:17.5px;line-height:17.5px;color:#323130;font-weight:400;font-family:'Liberation Sans', sans-serif;letter-spacing:-0.147px;left:1505px;">Other Accessories</div><div class="t" style="top:223.00px;font-size:16.5px;line-height:16.5px;color:#323130;font-weight:700;font-family:'Liberation Sans', sans-serif;letter-spacing:-0.225px;left:1496.5px;">Formula</div><div class="t" style="top:223.00px;font-size:17px;line-height:17px;color:#a4262c;font-weight:700;font-family:'Liberation Sans', sans-serif;left:1566px;">*</div><div class="b" style="left:1496px;top:255px;width:380px;height:260px;background:#fdfdfd;border:1px solid #e1dfdd;"></div><div class="b" style="left:1497px;top:478px;width:378px;height:36px;background:#f3f3f3;border-top:1px solid #e1dfdd;"></div><div class="t" style="top:270.00px;font-size:17.5px;line-height:17.5px;color:#1c7ad1;font-weight:400;font-family:'Liberation Sans', sans-serif;letter-spacing:-0.193px;left:1503.6px;">MIN</div><div class="t" style="top:270.00px;font-size:17.5px;line-height:17.5px;color:#323130;font-weight:400;font-family:'Liberation Sans', sans-serif;left:1535px;">(</div><div class="t" style="top:270.00px;font-size:17.5px;line-height:17.5px;color:#1c7ad1;font-weight:400;font-family:'Liberation Sans', sans-serif;letter-spacing:0.095px;left:1541px;">[Computers_Computers Accessories]</div><div class="t" style="top:270.00px;font-size:17.5px;line-height:17.5px;color:#323130;font-weight:400;font-family:'Liberation Sans', sans-serif;left:1837.5px;">,</div><div class="t" style="top:300.00px;font-size:17.5px;line-height:17.5px;color:#1c7ad1;font-weight:400;font-family:'Liberation Sans', sans-serif;letter-spacing:0.175px;left:1503.6px;">[Computers_Desktops]</div><div class="t" style="top:300.00px;font-size:17.5px;line-height:17.5px;color:#323130;font-weight:400;font-family:'Liberation Sans', sans-serif;left:1688.5px;">,</div><div class="t" style="top:330.00px;font-size:17.5px;line-height:17.5px;color:#1c7ad1;font-weight:400;font-family:'Liberation Sans', sans-serif;letter-spacing:0.246px;left:1503.6px;">[Computers_Laptops]</div><div class="t" style="top:330.00px;font-size:17.5px;line-height:17.5px;color:#323130;font-weight:400;font-family:'Liberation Sans', sans-serif;left:1679.5px;">,</div><div class="t" style="top:360.00px;font-size:17.5px;line-height:17.5px;color:#1c7ad1;font-weight:400;font-family:'Liberation Sans', sans-serif;letter-spacing:0.392px;left:1503.6px;">[Computers_Monitors]</div><div class="t" style="top:360.00px;font-size:17.5px;line-height:17.5px;color:#323130;font-weight:400;font-family:'Liberation Sans', sans-serif;left:1687.5px;">,</div><div class="t" style="top:360.00px;font-size:17.5px;line-height:17.5px;color:#1c7ad1;font-weight:400;font-family:'Liberation Sans', sans-serif;letter-spacing:0.283px;left:1695.4px;">[Computers_Printers,</div><div class="t" style="top:390.00px;font-size:17.5px;line-height:17.5px;color:#1c7ad1;font-weight:400;font-family:'Liberation Sans', sans-serif;letter-spacing:-0.424px;left:1503.6px;">Scanners &amp; Fax]</div><div class="t" style="top:390.00px;font-size:17.5px;line-height:17.5px;color:#323130;font-weight:400;font-family:'Liberation Sans', sans-serif;left:1630.5px;">,</div><div class="t" style="top:390.00px;font-size:17.5px;line-height:17.5px;color:#1c7ad1;font-weight:400;font-family:'Liberation Sans', sans-serif;letter-spacing:0.239px;left:1638.5px;">[Computers_Projectors &amp;</div><div class="t" style="top:420.00px;font-size:17.5px;line-height:17.5px;color:#1c7ad1;font-weight:400;font-family:'Liberation Sans', sans-serif;letter-spacing:-0.445px;left:1503.6px;">Screens]</div><div class="t" style="top:420.00px;font-size:17.5px;line-height:17.5px;color:#323130;font-weight:400;font-family:'Liberation Sans', sans-serif;left:1569.5px;">)</div><div class="t" style="top:450.00px;font-size:17.5px;line-height:17.5px;color:#323130;font-weight:400;font-family:'Liberation Sans', sans-serif;letter-spacing:0.467px;left:1503.5px;">//Minimum of computers</div><svg class="b" style="left:1500px;top:480px" width="40" height="32" viewBox="1500 480 40 32"><path d="M1526 488.6 C1523.3 486.9 1520.6 488.2 1519.9 492.4 L1517.3 504 C1516.5 507.8 1514.2 508.7 1512.2 506.9" stroke="#2a5cb8" stroke-width="2.1" fill="none" stroke-linecap="round"/><circle cx="1526.2" cy="489.3" r="1.5" fill="#2a5cb8"/><circle cx="1512.4" cy="506.4" r="1.5" fill="#2a5cb8"/><path d="M1515.5 494.4 H1523.5" stroke="#2a5cb8" stroke-width="1.5"/><text x="1522.5" y="503" font-family="Liberation Serif" font-style="italic" font-weight="700" font-size="18" fill="#1f3d7a">x</text></svg><div class="t" style="top:531.00px;font-size:16.5px;line-height:16.5px;color:#6b6967;font-weight:400;font-family:'Liberation Sans', sans-serif;letter-spacing:-0.077px;left:1520px;">Select any row in the table to add to the formula.</div><div class="t" style="top:556.00px;font-size:16.5px;line-height:16.5px;color:#6b6967;font-weight:400;font-family:'Liberation Sans', sans-serif;letter-spacing:-1.115px;left:1520.2px;">Use</div><div class="t" style="top:556.00px;font-size:16.5px;line-height:16.5px;color:#484644;font-weight:700;font-family:'Liberation Sans', sans-serif;letter-spacing:-0.901px;left:1550.5px;">Ctrl + Space</div><div class="t" style="top:556.00px;font-size:16.5px;line-height:16.5px;color:#6b6967;font-weight:400;font-family:'Liberation Sans', sans-serif;letter-spacing:-0.271px;left:1639.7px;">to open suggestion</div><div class="b" style="left:1495.5px;top:616px;width:24px;height:24px;background:#fdfdfd;border:2px solid #323130;"></div><div class="t" style="top:621.00px;font-size:17.5px;line-height:17.5px;color:#484644;font-weight:400;font-family:'Liberation Sans', sans-serif;letter-spacing:-0.048px;left:1532px;">Bind for Cross filter/RLS</div><div class="t" style="top:679.00px;font-size:16.5px;line-height:16.5px;color:#323130;font-weight:700;font-family:'Liberation Sans', sans-serif;letter-spacing:-0.368px;left:1496.5px;">Scaling Factor</div><div class="t" style="top:679.00px;font-size:17px;line-height:17px;color:#a4262c;font-weight:700;font-family:'Liberation Sans', sans-serif;left:1610px;">*</div><div class="b" style="left:1495.5px;top:709.5px;width:381px;height:47px;background:#fdfdfd;border:1px solid #e1dfdd;"></div><div class="t" style="top:725.00px;font-size:17.5px;line-height:17.5px;color:#323130;font-weight:400;font-family:'Liberation Sans', sans-serif;letter-spacing:-0.125px;left:1512.5px;">Auto</div><svg class="b" style="left:1836px;top:720px" width="30" height="25" viewBox="1836 720 30 25" fill="none"><path d="M1843 728.5 L1851.5 737 L1860 728.5" stroke="#605e5c" stroke-width="1.5"/></svg><div class="b" style="left:1495.5px;top:790px;width:24px;height:24px;background:#fdfdfd;border:2px solid #323130;"></div><div class="t" style="top:794.00px;font-size:17.5px;line-height:17.5px;color:#484644;font-weight:400;font-family:'Liberation Sans', sans-serif;letter-spacing:0.196px;left:1532px;">Include in total</div><div class="b" style="left:1495.5px;top:862px;width:24px;height:24px;background:#fdfdfd;border:2px solid #323130;"></div><div class="t" style="top:866.00px;font-size:17.5px;line-height:17.5px;color:#484644;font-weight:400;font-family:'Liberation Sans', sans-serif;letter-spacing:-0.019px;left:1532px;">Include in Charts</div><div class="b" style="left:1495.5px;top:934px;width:24px;height:24px;background:#fdfdfd;border:2px solid #323130;"></div><div class="t" style="top:938.00px;font-size:17.5px;line-height:17.5px;color:#484644;font-weight:400;font-family:'Liberation Sans', sans-serif;letter-spacing:-0.235px;left:1532px;">Evaluate Columns Before Rows</div><div class="b" style="left:1637px;top:992px;width:119px;height:53px;background:#f0f0f0;"></div><div class="t" style="top:1011.00px;font-size:18px;line-height:18px;color:#323130;font-weight:700;font-family:'Liberation Sans', sans-serif;letter-spacing:-0.506px;left:1396.5px;width:600px;text-align:center;">Close</div><div class="b" style="left:1771px;top:992px;width:120px;height:53px;background:#0078d4;"></div><div class="t" style="top:1011.00px;font-size:18px;line-height:18px;color:#ffffff;font-weight:700;font-family:'Liberation Sans', sans-serif;letter-spacing:0.078px;left:1531px;width:600px;text-align:center;">Update</div><svg class="b" style="left:1070px;top:474px" width="32" height="42" viewBox="1070 474 32 42" fill="none"><path d="M1076.3 478.8 V506.8 L1082.8 500.8 L1087.2 510.3 L1091.2 508.4 L1087.7 499.6 L1097 499.2 Z" fill="#fdfdfd" stroke="#000" stroke-width="1.3" stroke-linejoin="round"/></svg>
</body></html>
